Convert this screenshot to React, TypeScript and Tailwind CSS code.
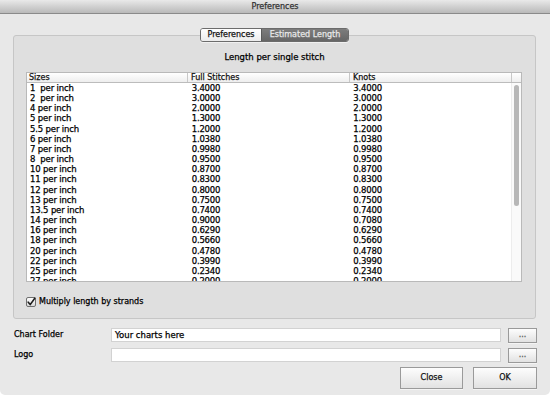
import React from 'react';

const rows: [string, string, string][] = [
  ['1  per inch', '3.4000', '3.4000'],
  ['2  per inch', '3.0000', '3.0000'],
  ['4 per inch', '2.0000', '2.0000'],
  ['5 per inch', '1.3000', '1.3000'],
  ['5.5 per inch', '1.2000', '1.2000'],
  ['6 per inch', '1.0380', '1.0380'],
  ['7 per inch', '0.9980', '0.9980'],
  ['8  per inch', '0.9500', '0.9500'],
  ['10 per inch', '0.8700', '0.8700'],
  ['11 per inch', '0.8300', '0.8300'],
  ['12 per inch', '0.8000', '0.8000'],
  ['13 per inch', '0.7500', '0.7500'],
  ['13.5 per inch', '0.7400', '0.7400'],
  ['14 per inch', '0.9000', '0.7080'],
  ['16 per inch', '0.6290', '0.6290'],
  ['18 per inch', '0.5660', '0.5660'],
  ['20 per inch', '0.4780', '0.4780'],
  ['22 per inch', '0.3990', '0.3990'],
  ['25 per inch', '0.2340', '0.2340'],
  ['27 per inch', '0.2000', '0.2000'],
];

const MacButton: React.FC<{ label: string; className?: string }> = ({ label, className = '' }) => (
  <button
    className={`flex items-center justify-center border border-[#9a9a9a] bg-linear-to-b from-[#fdfdfd] to-[#e2e2e2] text-[8px] text-[#111] shadow-[0_1px_0_#f4f4f4] ${className}`}
  >
    {label}
  </button>
);

export default function App() {
  return (
    <div
      className="w-[550px] h-[395px] flex flex-col bg-[#e8e8e8] text-[#111] rounded-b-[5px] overflow-hidden [-webkit-text-stroke:0.25px]"
      style={{ fontFamily: '"DejaVu Sans", "Liberation Sans", sans-serif' }}
    >
      {/* title bar */}
      <div className="h-[14px] shrink-0 flex items-center justify-center bg-linear-to-b from-[#e9e9e9] to-[#b9b9b9] border-b border-[#8a8a8a] text-[8px] text-[#333]">
        Preferences
      </div>

      <div className="flex flex-col pl-[13px] pr-[13px] pt-[21px]">
        {/* group box */}
        <div className="h-[284px] mr-[1px] flex flex-col border border-[#c6c6c6] rounded-[3px] bg-[#dfdfdf]">
          <div className="-mt-[8px] flex justify-center">
            <div className="flex h-[14px] rounded-[3px] border border-[#6c6c6c] overflow-hidden text-[8px] shadow-[0_1px_0_#f0f0f0]">
              <div className="w-[60px] flex items-center justify-center bg-linear-to-b from-[#ffffff] to-[#ececec] text-[#111]">
                Preferences
              </div>
              <div className="w-[87px] flex items-center justify-center border-l border-[#5a5a5a] bg-linear-to-b from-[#7d7d7d] to-[#666666] text-[#e8e8e8]">
                Estimated Length
              </div>
            </div>
          </div>

          <div className="mt-[9px] h-[12px] flex items-center justify-center text-[8.5px] text-black">
            Length per single stitch
          </div>

          {/* table */}
          <div className="mt-[9px] ml-[12px] mr-[13px] h-[210px] flex flex-col border border-[#b9b9b9] bg-white overflow-hidden">
            <div className="h-[10px] shrink-0 flex border-b border-[#bcbcbc] bg-linear-to-b from-[#ffffff] to-[#eeeeee] text-[8px] leading-[10px] text-[#111]">
              <div className="w-[161px] pl-[2px] border-r border-[#c8c8c8]">Sizes</div>
              <div className="w-[162px] pl-[3px] border-r border-[#c8c8c8]">Full Stitches</div>
              <div className="w-[162px] pl-[3px] border-r border-[#c8c8c8]">Knots</div>
              <div className="flex-1" />
            </div>
            <div className="flex flex-1 min-h-0">
              <div className="flex-1 flex flex-col overflow-hidden">
                {rows.map(([size, full, knots]) => (
                  <div key={size} className="h-[10.17px] shrink-0 flex text-[8.5px] leading-[10.17px] text-black">
                    <div className="w-[161px] pl-[3px] whitespace-pre tracking-[-0.15px]">{size}</div>
                    <div className="w-[162px] pl-[4px] tracking-[-0.2px]">{full}</div>
                    <div className="w-[162px] pl-[4px] tracking-[-0.2px]">{knots}</div>
                  </div>
                ))}
              </div>
              <div className="w-[10px] shrink-0 flex flex-col border-l border-[#ededed] bg-[#fafafa] pt-[2px] pl-[2px]">
                <div className="w-[5px] h-[121px] rounded-full bg-[#b7b7b7] [-webkit-text-stroke:0]" />
              </div>
            </div>
          </div>

          {/* checkbox */}
          <div className="mt-[15px] ml-[12px] flex items-center gap-[3px] h-[10px] text-[8px] text-black">
            <svg width="10" height="10" viewBox="0 0 10 10">
              <defs>
                <linearGradient id="cb" x1="0" y1="0" x2="0" y2="1">
                  <stop offset="0" stopColor="#ffffff" />
                  <stop offset="1" stopColor="#d6d6d6" />
                </linearGradient>
              </defs>
              <rect x="0.5" y="0.5" width="9" height="9" rx="1.5" fill="url(#cb)" stroke="#6f6f6f" />
              <path d="M2.2 5.2 L4.2 7.6 L8.8 1.2" fill="none" stroke="#1e1e1e" strokeWidth="1.6" strokeLinecap="round" strokeLinejoin="round" />
            </svg>
            <span>Multiply length by strands</span>
          </div>
        </div>

        {/* folder rows */}
        <div className="mt-[9px] flex items-center h-[14px]">
          <div className="w-[98px] pl-[1px] text-[8px] text-black">Chart Folder</div>
          <div className="w-[390px] h-[14px] flex items-center pl-[3px] bg-white border border-[#d2d2d2] text-[8.5px] text-black">
            Your charts here
          </div>
          <MacButton label="..." className="ml-[7px] w-[29px] h-[15px] text-[#555]" />
        </div>
        <div className="mt-[6px] flex items-center h-[14px]">
          <div className="w-[98px] pl-[1px] text-[8px] text-black">Logo</div>
          <div className="w-[390px] h-[14px] bg-white border border-[#d2d2d2]" />
          <MacButton label="..." className="ml-[7px] w-[29px] h-[15px] text-[#555]" />
        </div>

        <div className="mt-[5px] flex justify-end gap-[10px]">
          <MacButton label="Close" className="w-[63px] h-[22px]" />
          <MacButton label="OK" className="w-[64px] h-[22px]" />
        </div>
      </div>
    </div>
  );
}
